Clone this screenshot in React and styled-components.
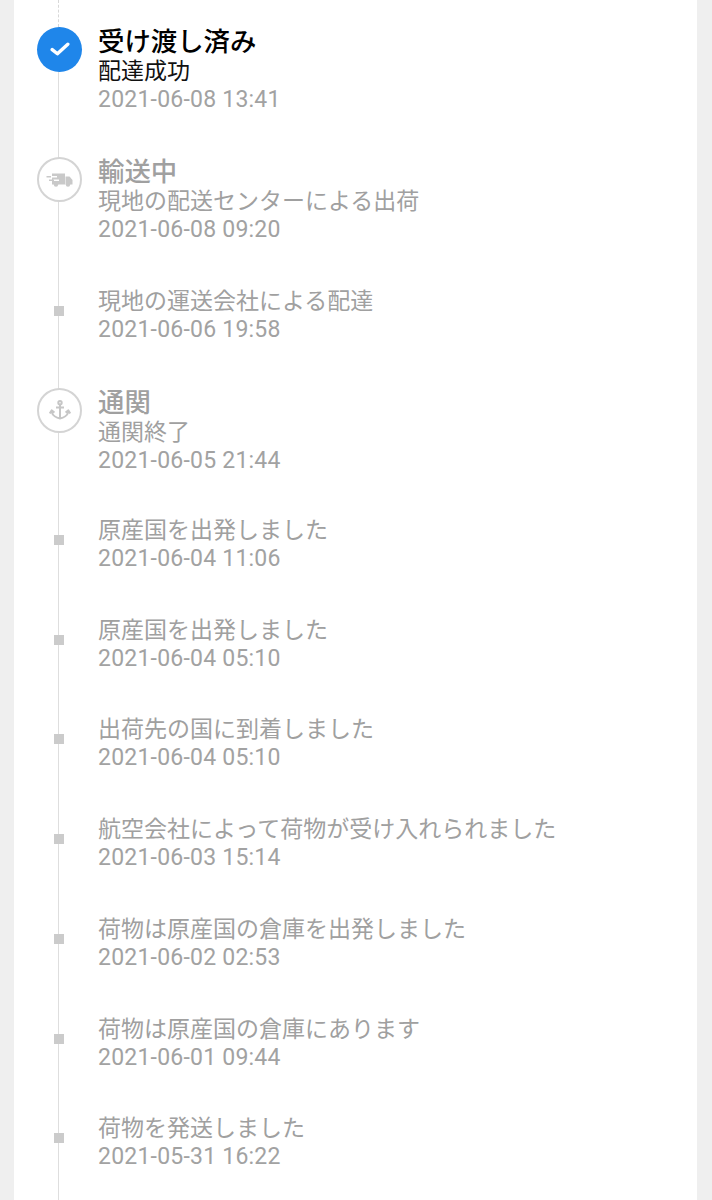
import React from 'react';
import styled, { createGlobalStyle } from 'styled-components';

const GlobalStyle = createGlobalStyle`
  html, body {
    margin: 0;
    padding: 0;
    height: 1200px;
    overflow: hidden;
    background: #efefef;
  }
`;

const Sheet = styled.div`
  width: 683px;
  height: 1200px;
  margin-left: 14px;
  padding-top: 26.5px;
  box-sizing: border-box;
  overflow: hidden;
  background: #fff;
  font-family: Roboto, 'Noto Sans CJK JP', sans-serif;
`;

const Row = styled.div`
  position: relative;
  display: flex;
  padding-bottom: ${props => props.$gap}px;

  &::before {
    content: '';
    position: absolute;
    left: 44px;
    top: 0;
    bottom: 0;
    width: 1px;
    background: #dedede;
  }
`;

const LeadIn = styled.div`
  position: absolute;
  left: 44px;
  top: -27px;
  height: 27px;
  border-left: 1px dashed #d8d8d8;
`;

const MarkerColumn = styled.div`
  position: relative;
  z-index: 1;
  flex: 0 0 84px;
  display: flex;
  justify-content: center;
  padding-left: 7px;
  box-sizing: border-box;
  align-items: flex-start;
`;

const Circle = styled.div`
  width: 45px;
  height: 45px;
  box-sizing: border-box;
  border-radius: 50%;
  display: flex;
  align-items: center;
  justify-content: center;
  background: ${props => (props.$active ? '#1f86ea' : '#fff')};
  border: ${props => (props.$active ? 'none' : '2px solid #d4d4d4')};
`;

const Dot = styled.div`
  width: 10px;
  height: 10px;
  margin: 19px 2px 0 0;
  background: #cbcbcb;
`;

const Body = styled.div`
  display: flex;
  flex-direction: column;
`;

const Title = styled.div`
  font-size: 26.4px;
  line-height: 30px;
  height: 30px;
  font-weight: 500;
  color: ${props => (props.$active ? '#000' : '#a0a0a0')};
`;

const Message = styled.div`
  font-size: 23px;
  line-height: 29px;
  color: ${props => (props.$active ? '#111' : '#a0a0a0')};
`;

const Stamp = styled.div`
  font-size: 23px;
  line-height: 28px;
  letter-spacing: 0.22px;
  color: #a2a2a2;
`;

const CheckIcon = () => (
  <svg width="20" height="14" viewBox="0 0 20 14" fill="none" stroke="#fff" strokeWidth="3.4" strokeLinecap="round" strokeLinejoin="round">
    <path d="M2.2 7.6 7.4 11.8 17.8 2.2" />
  </svg>
);

const TruckIcon = () => (
  <svg width="27" height="14" viewBox="0 0 27 14" fill="#c9c9c9">
    <path d="M6 0.5h13v11H6z" />
    <path d="M19.5 3.5h4l3 3.5v4.5h-7z" />
    <circle cx="10" cy="11.5" r="2.2" />
    <circle cx="22" cy="11.5" r="2.2" />
    <path d="M4 3h7v1.5H4zM7 6.5h6V8H7z" fill="#fff" />
    <path d="M0.5 3h4.5v1.4H0.5zM3 6.5h5v1.4H3z" />
  </svg>
);

const AnchorIcon = () => (
  <svg width="22" height="20" viewBox="0 0 22 20" fill="none" stroke="#c6c6c6" strokeWidth="2">
    <circle cx="11" cy="2.8" r="1.7" />
    <path d="M11 4.5V18.5M7 7.5h8" />
    <path d="M2.5 11.5C3.5 15.5 7.5 18 11 18.5 14.5 18 18.5 15.5 19.5 11.5" />
    <path d="M0.8 13.4 2.6 10.4 5.4 12.6M21.2 13.4 19.4 10.4 16.6 12.6" strokeLinejoin="round" />
  </svg>
);

const events = [
  { title: '受け渡し済み', message: '配達成功', stamp: '2021-06-08 13:41', icon: 'check', active: true, gap: 43.5 },
  { title: '輸送中', message: '現地の配送センターによる出荷', stamp: '2021-06-08 09:20', icon: 'truck', gap: 42.5 },
  { message: '現地の運送会社による配達', stamp: '2021-06-06 19:58', gap: 44 },
  { title: '通関', message: '通関終了', stamp: '2021-06-05 21:44', icon: 'anchor', gap: 41.25 },
  { message: '原産国を出発しました', stamp: '2021-06-04 11:06' },
  { message: '原産国を出発しました', stamp: '2021-06-04 05:10' },
  { message: '出荷先の国に到着しました', stamp: '2021-06-04 05:10' },
  { message: '航空会社によって荷物が受け入れられました', stamp: '2021-06-03 15:14' },
  { message: '荷物は原産国の倉庫を出発しました', stamp: '2021-06-02 02:53' },
  { message: '荷物は原産国の倉庫にあります', stamp: '2021-06-01 09:44' },
  { message: '荷物を発送しました', stamp: '2021-05-31 16:22' },
];

const Marker = ({ icon, active }) => {
  if (!icon) return <Dot />;
  return (
    <Circle $active={active}>
      {icon === 'check' && <CheckIcon />}
      {icon === 'truck' && <TruckIcon />}
      {icon === 'anchor' && <AnchorIcon />}
    </Circle>
  );
};

export default function App() {
  return (
    <>
      <GlobalStyle />
      <Sheet>
        {events.map((event, i) => (
          <Row key={i} $gap={event.gap ?? 42.75}>
            {i === 0 && <LeadIn />}
            <MarkerColumn>
              <Marker icon={event.icon} active={event.active} />
            </MarkerColumn>
            <Body>
              {event.title && <Title $active={event.active}>{event.title}</Title>}
              <Message $active={event.active}>{event.message}</Message>
              <Stamp>{event.stamp}</Stamp>
            </Body>
          </Row>
        ))}
      </Sheet>
    </>
  );
}
